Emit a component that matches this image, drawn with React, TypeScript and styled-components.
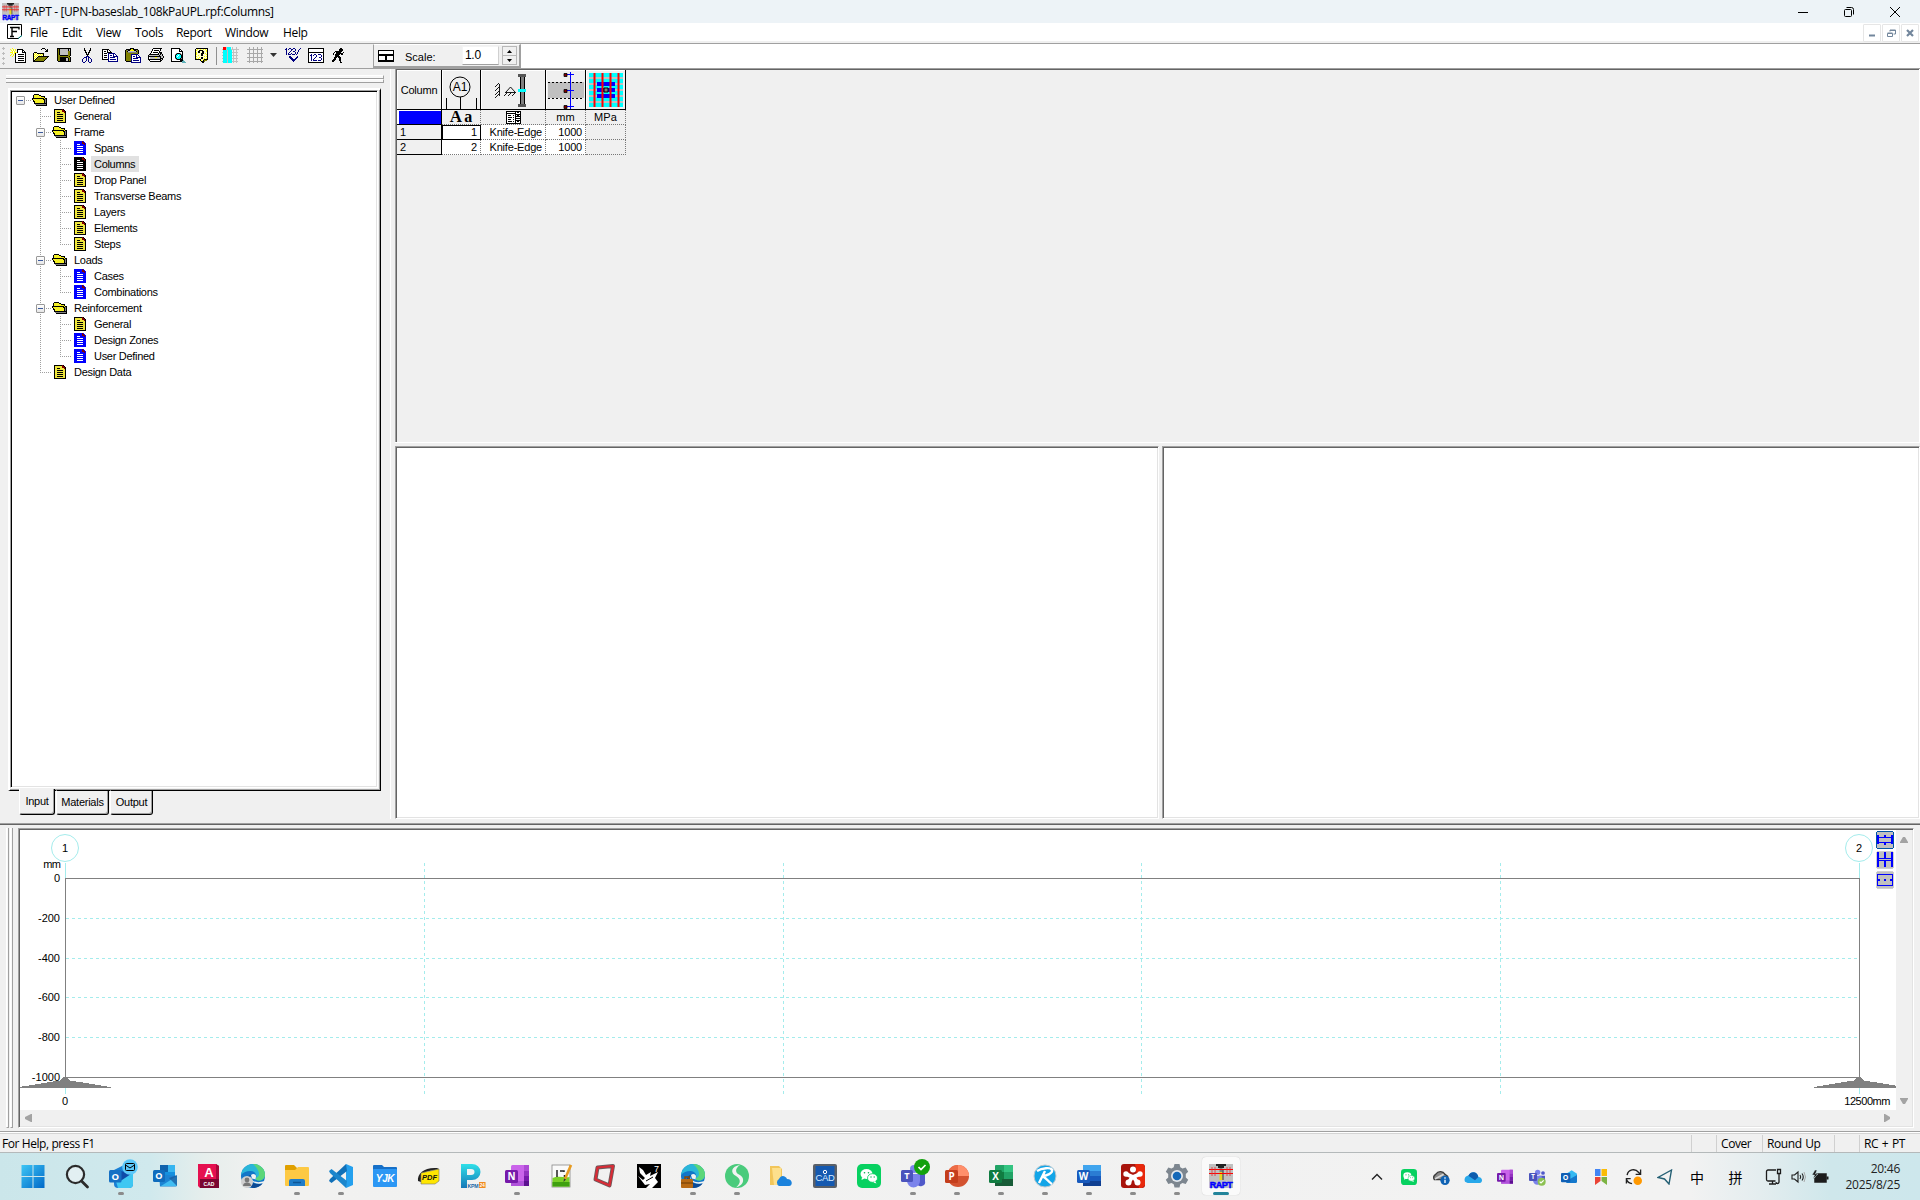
import React from 'react';
import styled, { createGlobalStyle } from 'styled-components';

const uiFont = `"Open Sans", "Noto Sans", sans-serif`;
const sansFont = `"Liberation Sans", Arial, sans-serif`;
const face = '#f0f0f0';

const Global = createGlobalStyle`
  * { box-sizing: border-box; }
  html, body { margin: 0; padding: 0; overflow: hidden; }
  body { width: 1920px; height: 1200px; background: ${face}; color: #000; }
  svg { display: block; flex: none; }
`;

/* ---------- bitmap icons ---------- */

const palette: Record<string, string> = {
  k: '#000000', w: '#ffffff', y: '#ffff00', Y: '#e8e04a', o: '#808000', g: '#808080', s: '#c0c0c0',
  n: '#000080', b: '#0000ff', c: '#00ffff', r: '#ff0000', m: '#800000', d: '#404040', t: '#5fb0b8', p: '#ffffc8',
};

function Bitmap({ rows, colors = {} }: { rows: string[]; colors?: Record<string, string> }) {
  const cells: React.ReactElement[] = [];
  rows.forEach((row, y) => {
    let x = 0;
    while (x < row.length) {
      const ch = row[x];
      let end = x + 1;
      while (end < row.length && row[end] === ch) end += 1;
      const fill = colors[ch] || palette[ch];
      if (fill) cells.push(<rect key={`${x}-${y}`} x={x} y={y} width={end - x} height={1} fill={fill} />);
      x = end;
    }
  });
  const width = Math.max(...rows.map((r) => r.length));
  return <svg width={width} height={rows.length} shapeRendering="crispEdges">{cells}</svg>;
}

const folderRows = [
  '..kkkkk.........',
  '.kYyYyYkk.......',
  '.kyYyYyYykkkk...',
  '.kYyYyYyYyYyk...',
  'kkkkkkkkkkkkykk.',
  'kYyYyYyYyYykkgk.',
  '.kyYyYyYyYyYkgk.',
  '.kkyYyYyYyYykgk.',
  '..kYyYyYyYyYkgk.',
  '..kkkkkkkkkkkkk.',
  '...gggggggggggk.',
  '....kkkkkkkkkkk.',
];

const docRows = [
  'OOOOOOOOmO..',
  'OFFFFFFFmmO.',
  'OFFFFFFFmmmO',
  'OFFLLLFFFFmO',
  'OFFFFFFFFFFO',
  'OFFLLLLLLFFO',
  'OFFFFFFFFFFO',
  'OFFLLLLLLFFO',
  'OFFFFFFFFFFO',
  'OFFLLLLLLFFO',
  'OFFFFFFFFFFO',
  'OFFLLLLLLFFO',
  'OFFFFFFFFFFO',
  'OOOOOOOOOOOO',
];

const docColors: Record<string, Record<string, string>> = {
  yellow: { O: '#000', F: '#efe63c', L: '#000' },
  blue: { O: '#0000ff', F: '#0000ff', L: '#fff' },
  black: { O: '#000', F: '#000', L: '#fff' },
};

const toolIcons: Record<string, string[]> = {
  create: [
    '..y.............', 'y..y.y.kkkkkk...', '.y.y.y.kwwwwkk..', '..ywy..kwwwwkwk.', 'yyywyyykwwwwkkkk', '..ywykwwwwwwwwwk',
    '.y.y.kwwkkkkkkwk', 'y..y.kwwwwwwwwwk', '..y..kwwkkkkkkwk', '.....kwwwwwwwwwk', '.....kwwkkkkkkwk', '.....kwwwwwwwwwk',
    '.....kwwkkkkkkwk', '.....kwwwwwwwwwk', '.....kkkkkkkkkkk',
  ],
  open: [
    '.........kkk....', '........k...k.k.', '.............kk.', '............kkk.', '.kkk............', 'kpypkkkkkkk.....',
    'kypypypypyk.....', 'kpypypypypk.....', 'kypypkkkkkkkkkkk', 'kpypkoooooooook.', 'kypkoooooooook..', 'kpkoooooooook...', 'kkoooooooook....', 'kkkkkkkkkkk.....',
  ],
  save: [
    'kkkkkkkkkkkkkk', 'kokssssssssksk', 'kokssssssssksk', 'kokssssssssook', 'kokssssssssook', 'kokssssssssook', 'kokssssssssook', 'kookkkkkkkkook',
    'koooooooooook.', 'kookkkkkkkkook', 'kookkkkkksskok', 'kookkkkkksskok', 'kookkkkkksskok', '.kkkkkkkkkkkkk',
  ],
  cut: [
    '..k.....k', '..k.....k', '..kk...kk', '...k...k.', '...kk.kk.', '....k.k..', '....kkk..', '.....k...',
    '....nnn..', '..nnn.nn.', '.n..n.n.n', 'n...n.n..n', 'n...n.n..n', 'n..n..n..n', '.nn....nn',
  ],
  copy: [
    'kkkkkkk.........', 'kwwwwkwk........', 'kwkkwkwwk.......', 'kwwwwkkkkk......', 'kwkkkwnnnnnnn...', 'kwwwwwnwwwwnwn..', 'kwkkkwnwnnwnwwn.', 'kwwwwwnwwwwnnnnn',
    'kwkkkwnwnnnnnwwn', 'kwwwwwnwwwwwwwwn', 'kkkkkknwnnnnnnwn', '......nwwwwwwwwn', '......nnnnnnnnnn',
  ],
  paste: [
    '.....kkkk.......', '.kkkkkyykkkkk...', 'kogkkyyyykkgok..', 'koksssssssskok..', 'koogggggggggok..', 'kooooooooooook..', 'kooooonnnnnnn...', 'kooooonwwwwnwn..',
    'kooooonwnnwnwwn.', 'kooooonwwwwnnnnn', 'kooooonwnnnnnwwn', 'kooooonwwwwwwwwn', 'kooooonwnnnnnnwn', '.kkkkknwwwwwwwwn', '......nnnnnnnnnn',
  ],
  print: [
    '.....kkkkkkkkk..', '....kwwwwwwwk...', '....kwkkkkkwk...', '...kwwwwwwwk....', '...kwkkkkkwkkk..', '..kwwwwwwwkskk..', '.kkkkkkkkkksksk.', 'ksssssssssskssk.',
    'kkkkkkkkkkkkkssk', 'kwsssssyyssskssk', 'kwsssssssssskkk.', 'kkkkkkkkkkkkksk.', '.kwwwwwwwwwwkk..', '..kkkkkkkkkkk...',
  ],
  preview: [
    'kkkkkkkkk.......', 'kwwwwwwwkk......', 'kwwwwwwwkwk.....', 'kwwwwwwwkkkk....', 'kwwwwwwwwwwk....', 'kwwwwgkkkgwk....', 'kwwwgkccckgk....', 'kwwwkccwcckk....',
    'kwwwkcwccckk....', 'kwwwkccccckk....', 'kwwwgkccckgk....', 'kwwwwgkkkkkk....', 'kwwwwwwwwkkkt...', 'kkkkkkkkkkkttt..', '...........tttt.',
  ],
  help: [
    '.kkkkkkkkkkkk.', 'kpyppyppypypk.', 'kyppkkkkpppyk.', 'kppkkppkkppyk.', 'kypkkppkkpppk.', 'kyppppkkkpypk.', 'kyppppkkpppyk.', 'kppyppkkppppk.',
    'kypppppppypyk.', 'kpppypkkppppk.', 'kypyppkkpypyk.', 'kkkkkkppykkkk.', '.....kypkooo..', '......kkko....', '.......kk.....',
  ],
  colorGrid: [
    '.rrrscccc.s...s.', '.rrrscccc.s...s.', 'srrrsccccssssssss', '.ccccscccc.s..s.', '.ccccscccc.s..s.', 'sccccsccccssssss', '.ccccscccc.s..s.', '.ccccscccc.s..s.',
    'sccccsccccssssss', '.ccccscccc.s..s.', '.ccccscccc.s..s.', 'sccccsccccssssss', '.ccccscccc.s..s.', '.ccccscccc.s..s.', 'sccccsccccssssss', '.ccccscccc.s..s.',
  ],
  gridLines: [
    '..g...g...g...g.', '..g...g...g...g.', 'gggggggggggggggg', '..g...g...g...g.', '..g...g...g...g.', '..g...g...g...g.', 'gggggggggggggggg', '..g...g...g...g.',
    '..g...g...g...g.', '..g...g...g...g.', 'gggggggggggggggg', '..g...g...g...g.', '..g...g...g...g.', '..g...g...g...g.', 'gggggggggggggggg', '..g...g...g...g.',
  ],
  check: [
    '.n..nn..nn.....n', 'nn.n..nn..n...n.', '.n....n...n..n..', '.n...n..nn...n..', '.n..n.....n.n...', '.n.n..n...n.n...', '.n.nnn.nnn.n....', '................',
    '....nn......n...', '....nnn....nn...', '.....nnn..nn....', '......nnnnn.....', '.......nnn......', '........n.......',
  ],
  numbers: [
    'kkkkkkkkkkkkkkkk', 'kwwwwwwwwwwwwwwk', 'kwwwwwwwwwwwwwwk', 'kwwwwwwwwwwwwwwk', 'kkkkkkkkkkkkkkkk', 'kwwwwwwwwwwwwwwk', 'kwwnwwnnwwnnnwwk', 'kwnnwnwwnwwwwnwk',
    'kwwnwwwwnwwwwnwk', 'kwwnwwwnwwwnnwwk', 'kwwnwwnwwwwwwnwk', 'kwwnwnwwwwwwwnwk', 'kwwnwnnnnwnnnwwk', 'kwwwwwwwwwwwwwwk', 'kkkkkkkkkkkkkkkk',
  ],
  run: [
    '........kk...', '.......kkkk..', '.......kkkk..', '...kkkkkkk...', '..k.kkkkk..k.', '.k..kkkkkkk..', '.k.kkkkk.kk..', '...kkkk......',
    '...kkkkk.....', '..kkk.kkk....', '..kk...kk....', '.kkk...kk....', 'kkk....kk....', 'kk......k....', '........kk...',
  ],
  panes: [
    'kkkkkkkkkkkkkkkk', 'kwwwwwwwwwwwwwwk', 'kwwwwwwwwwwwwwwk', 'kwwwwwwwwwwwwwwk', 'kkkkkkkkkkkkkkkk', 'kkkkkkkkkkkkkkkk', 'kwwwwwwkkwwwwwwk', 'kwwwwwwkkwwwwwwk', 'kwwwwwwkkwwwwwwk', 'kwwwwwwkkwwwwwwk', 'kkkkkkkkkkkkkkkk', 'kkkkkkkkkkkkkkkk',
  ],
};

/* ---------- window frame ---------- */

const Screen = styled.div`
  width: 1920px; height: 1200px; display: flex; flex-direction: column; overflow: hidden; background: ${face};
`;
const TitleBar = styled.header`
  height: 23px; flex: none; display: flex; align-items: center; background: #edf3f7; padding: 0 2px 0 2px;
  font: 12px/22px ${uiFont};
`;
const TitleText = styled.span` margin-left: 5px; letter-spacing: -0.36px; flex: 1; white-space: nowrap; `;
const WindowButton = styled.span` width: 46px; height: 22px; display: flex; align-items: center; justify-content: center; `;
const MenuBar = styled.nav`
  height: 21px; flex: none; display: flex; background: #fff; border-bottom: 1px solid #a0a0a0; padding-left: 7px;
  box-shadow: inset 0 -2px ${face}; font: 12px/19px ${uiFont};
`;
const MenuIcon = styled.span` width: 23px; padding-top: 1px; `;
const MenuItem = styled.span<{ $w: number }>` width: ${(p) => p.$w}px; letter-spacing: -0.35px; white-space: nowrap; `;
const MenuSpace = styled.span` flex: 1; `;
const ChildButton = styled.span`
  width: 18px; height: 18px; margin: 1px 1px 0 0; border: 1px solid #e6e6e6; border-radius: 1px; background: #fff;
  display: flex; align-items: center; justify-content: center;
`;
const ToolBand = styled.div` height: 24px; flex: none; display: flex; background: #fff; `;
const ToolBar = styled.div` width: 373px; display: flex; align-items: center; background: ${face}; `;
const Grip = styled.span`
  width: 6px; height: 20px; background: radial-gradient(circle, #bdbdbd 1.2px, transparent 1.4px) 0 0 / 7px 5px;
`;
const Tool = styled.span<{ $w?: number }>` width: ${(p) => p.$w || 23}px; height: 24px; padding-bottom: 2px; display: flex; align-items: center; justify-content: center; `;
const ToolSeparator = styled.span` width: 1px; height: 18px; margin: 0 2px 0 3px; background: #909090; `;
const ScaleBar = styled.div`
  width: 148px; display: flex; align-items: center; background: ${face}; border: 1px solid #a0a0a0; border-width: 1px 2px 2px 1px;
  border-top-color: #fff; font: 11px/20px ${sansFont}; padding-left: 4px;
`;
const ScaleLabel = styled.span` width: 68px; padding: 2px 0 0 11px; `;
const ScaleInput = styled.span`
  width: 37px; height: 19px; background: #fff; border: 1px solid #e3e3e3; border-color: #f4f4f4 #d0d0d0 #a0a0a0 #f4f4f4; font: 12px/17px ${sansFont}; letter-spacing: -0.3px; padding-left: 2px;
`;
const Spin = styled.span` width: 15px; height: 19px; margin-left: 3px; display: flex; flex-direction: column; border: 1px solid #b8b8b8; background: ${face}; `;
const SpinHalf = styled.span` flex: 1; display: flex; align-items: center; justify-content: center; & + & { border-top: 1px solid #b8b8b8; } `;

/* ---------- workspace ---------- */

const Workspace = styled.main` height: 755px; flex: none; display: flex; border-top: 1px solid #a0a0a0; `;
const SidePane = styled.aside` width: 391px; flex: none; padding: 6px 0 0 6px; border-right: 1px solid #fff; height: 750px; `;
const DockGrip = styled.div`
  width: 378px; height: 4px; border: 1px solid #fff; border-width: 1px 0 0; border-bottom: 1px solid #a0a0a0; border-right: 1px solid #a0a0a0; background: #f8f8f8;
`;
const TabFrame = styled.div`
  width: 373px; height: 703px; margin: 5px 0 0 2px; padding: 0 1px 1px 0; border: 1px solid #fff; border-width: 2px 1px 1px 2px; border-right-color: #000; border-bottom-color: #000;
  box-shadow: inset -1px -1px #a0a0a0;
`;
const TreeBox = styled.div`
  width: 368px; height: 698px; background: #fff; border: 1px solid #a0a0a0; border-right-color: #fff; border-bottom-color: #fff;
  box-shadow: inset 1px 1px #000, inset -1px -1px #e3e3e3; padding: 1px 0 0 1px;
`;
const TreeRow = styled.div` height: 16px; display: flex; align-items: center; font: 11px/16px ${sansFont}; letter-spacing: -0.3px; `;
const TreeCell = styled.span<{ $v?: string; $h?: boolean }>`
  width: 20px; height: 16px; flex: none; display: flex; align-items: center; padding-left: 4px;
  background-image: ${(p) => [
    p.$v ? 'repeating-linear-gradient(180deg, #a0a0a0 0 1px, transparent 1px 2px)' : 'none',
    p.$h ? 'repeating-linear-gradient(90deg, #a0a0a0 0 1px, transparent 1px 2px)' : 'none',
  ].join(', ')};
  background-repeat: no-repeat;
  background-size: 1px ${(p) => (p.$v === 'half' ? '9px' : '16px')}, 12px 1px;
  background-position: 8px 0, 8px 8px;
`;
const Expander = styled.span`
  width: 9px; height: 9px; border: 1px solid #989898; border-radius: 1px; background: linear-gradient(#fff, #e6e6e6); display: flex; align-items: center; justify-content: center;
  &::after { content: ''; width: 5px; height: 1px; background: #3c5a9c; }
`;
const TreeIcon = styled.span` width: 19px; height: 16px; flex: none; display: flex; align-items: center; `;
const DocSlot = styled.span` padding-left: 2px; `;
const TreeLabel = styled.span<{ $on?: boolean }>` height: 16px; padding: 0 4px 0 3px; background: ${(p) => (p.$on ? '#e1e1e1' : 'transparent')}; white-space: nowrap; `;
const Tabs = styled.div` display: flex; padding-left: 13px; font: 11px/23px ${sansFont}; letter-spacing: -0.25px; `;
const Tab = styled.span<{ $w: number; $on?: boolean }>`
  width: ${(p) => p.$w}px; height: 25px; margin: -1px 1px 0 0; text-align: center; background: ${face};
  border: 1px solid #000; border-width: 0 1px 1px 1px; border-left-color: #fff; border-radius: 0 0 3px 3px; box-shadow: inset -1px -1px #a0a0a0;
  ${(p) => p.$on ? 'position: relative; top: -1px; height: 26px; padding-top: 1px;' : 'border-top: 1px solid #000;'}
`;

const Content = styled.section` flex: 1; display: flex; flex-direction: column; margin-left: 4px; `;
const GridPane = styled.div` height: 373px; flex: none; border-left: 1px solid #a0a0a0; border-right: 1px solid #fff; box-shadow: inset 1px 1px #646464; padding: 1px 0 0 1px; `;
const PaneRow = styled.div` display: flex; gap: 3px; border-top: 1px solid #fff; padding-top: 3px; height: 378px; `;
const ViewPane = styled.div<{ $w: number }>`
  width: ${(p) => p.$w}px; height: 373px; background: #fff; border: 1px solid #a0a0a0; border-right-color: #fff; border-bottom-color: #fff; box-shadow: inset 1px 1px #646464, inset -1px -1px #e3e3e3;
`;

const Sheet = styled.div`
  display: grid; width: 229px; grid-template-columns: 45px 39px 65px 40px 40px; grid-template-rows: 40px 15px 15px 15px; font: 11px/14px ${sansFont}; letter-spacing: -0.2px;
`;
const Head = styled.div` background: ${face}; border-right: 1px solid #000; border-bottom: 1px solid #000; box-shadow: inset 1px 1px #fff; display: flex; align-items: center; justify-content: center; `;
const Stub = styled.div<{ $blue?: boolean }>` background: ${(p) => (p.$blue ? '#0000ff' : face)}; border-right: 1px solid #000; border-bottom: 1px solid #000; padding-left: 3px; ${(p) => (p.$blue ? 'box-shadow: inset 2px 1px #fff;' : '')} `;
const Cell = styled.div<{ $bg?: string; $center?: boolean; $active?: boolean }>`
  background: ${(p) => p.$bg || '#fff'}; padding-right: ${(p) => (p.$center ? 0 : 3)}px; text-align: ${(p) => (p.$center ? 'center' : 'right')};
  border-right: 1px dotted #777; border-bottom: 1px dotted #777; display: flex; justify-content: ${(p) => (p.$center ? 'center' : 'flex-end')}; align-items: center;
  ${(p) => (p.$active ? 'outline: 1px solid #000; outline-offset: -1px; border-color: #000;' : '')}
`;
const Serif = styled.span` font: bold 17px/12px "Liberation Serif", serif; letter-spacing: 2px; & small { font-size: 16px; letter-spacing: 0; } `;
const Unit = styled.span` letter-spacing: 0.2px; `;

/* ---------- bottom panel ---------- */

const Bottom = styled.section` height: 308px; flex: none; border-top: 1px solid #a0a0a0; box-shadow: inset 0 1px #646464; display: flex; padding: 4px 0 0 6px; `;
const SideGrip = styled.span` width: 3px; height: 300px; margin-right: 1px; border-left: 1px solid #fff; border-right: 1px solid #a0a0a0; border-bottom: 1px solid #a0a0a0; background: #f8f8f8; `;
const Viewer = styled.div`
  width: 1896px; height: 300px; margin-left: 4px; border: 1px solid #a0a0a0; border-right-color: #fff; border-bottom-color: #fff;
  box-shadow: inset 1px 1px #646464, inset -1px -1px #e3e3e3; padding: 1px 0 0 1px; display: grid; grid-template-columns: 1876px 16px; grid-template-rows: 280px 16px;
`;
const Canvas = styled.div` background: #fff; position: relative; `;
const VScroll = styled.div` background: ${face}; display: flex; flex-direction: column; align-items: center; justify-content: space-between; padding: 6px 0 5px; `;
const HScroll = styled.div` background: ${face}; display: flex; align-items: center; justify-content: space-between; padding: 0 5px 0 5px; `;
const ViewButtons = styled.div` position: absolute; top: 1px; right: 2px; display: flex; flex-direction: column; gap: 2px; `;

const StatusBar = styled.footer` height: 21px; flex: none; border-top: 1px solid #a0a0a0; display: flex; background: ${face}; box-shadow: inset 0 1px #fff, inset 0 2px #d4d4d4; font: 12px/20px ${uiFont}; letter-spacing: -0.42px; padding-top: 3px; `;
const StatusText = styled.span` flex: 1; padding-left: 2px; line-height: 18px; `;
const StatusCell = styled.span<{ $w: number }>` width: ${(p) => p.$w}px; height: 17px; border-left: 1px solid #d0d0d0; padding-left: 4px; line-height: 18px; white-space: nowrap; word-spacing: 1px; `;

/* ---------- taskbar ---------- */

const TaskBar = styled.div`
  height: 48px; flex: none; border-top: 1px solid #b4b9ba; display: flex; padding-left: 11px;
  background: linear-gradient(90deg, #cbe6ea 0, #d0e9ed 150px, #e6eeec 205px, #f1f1f0 260px, #f2f2f2 1690px, #e4edef 1760px, #cfe7eb 1830px, #cde7ec 1920px);
`;
const TaskItem = styled.span<{ $active?: boolean }>`
  width: 44px; height: 47px; display: flex; align-items: center; justify-content: center; position: relative;
  & > svg { overflow: visible; position: relative; z-index: 1; margin-top: -1px; }
  ${(p) => p.$active ? `&::before { content: ''; position: absolute; left: 3px; top: 4px; width: 38px; height: 38px; border-radius: 4px; background: #fafafa; box-shadow: 0 0 1px #bbb; }` : ''}
`;
const Running = styled.i<{ $active?: boolean }>`
  position: absolute; bottom: 5px; left: ${(p) => (p.$active ? 14 : 19)}px; width: ${(p) => (p.$active ? 16 : 6)}px; height: 3px; border-radius: 2px; background: ${(p) => (p.$active ? '#23849a' : '#8b8b8b')};
`;
const Tray = styled.div` margin-left: auto; display: flex; align-items: center; `;
const TrayItem = styled.span<{ $w?: number }>` width: ${(p) => p.$w || 32}px; display: flex; justify-content: center; font: 14px/20px "Noto Sans CJK SC", sans-serif; `;
const Clock = styled.div` width: 68px; margin-right: 20px; text-align: right; font: 12px/16px ${uiFont}; color: #222; letter-spacing: -0.25px; `;
const OverflowSvg = styled.svg` overflow: visible; `;

const svgText = (size: number, extra: React.CSSProperties = {}): React.CSSProperties => ({ fontFamily: 'Liberation Sans, sans-serif', fontSize: size, ...extra });

function Badge({ children, fill, x = 0, y = 5, s = 14 }: { children: string; fill: string; x?: number; y?: number; s?: number }) {
  return (
    <g>
      <rect x={x} y={y} width={s} height={s} rx="1.5" fill={fill} />
      <text x={x + s / 2} y={y + s * 0.78} textAnchor="middle" fill="#fff" style={svgText(s * 0.76, { fontWeight: 700, fontFamily: 'Open Sans, sans-serif' })}>{children}</text>
    </g>
  );
}

function OutlookArt() {
  return (
    <g>
      <rect x="7" y="1" width="15" height="14" rx="1" fill="#1490df" />
      <path d="M7 1h8v7H7z" fill="#0f62ac" /><path d="M15 1h7v7h-7z" fill="#35b5f0" />
      <path d="M6 10l18 2v9a1.500 1.500 0 0 1-1.500 1.500H7z" fill="#1b83d3" />
      <path d="M24 12L8 22h15a1 1 0 0 0 1-1z" fill="#41bdf2" />
      <path d="M16 14l8 8V11z" fill="#185a9e" opacity=".75" />
      <Badge fill="#0f6cbd" y={6} s={12}>O</Badge>
    </g>
  );
}

function WeChatArt() {
  return (
    <g>
      <rect width="24" height="24" rx="5" fill="#07d160" />
      <ellipse cx="9.500" cy="10" rx="6" ry="5" fill="#fff" /><path d="M5 13l-.5 3 3-1.500z" fill="#fff" />
      <ellipse cx="15.500" cy="14" rx="5" ry="4.300" fill="#fff" stroke="#07d160" strokeWidth=".8" /><path d="M18 17l1.500 2.500-3-1z" fill="#fff" />
      <circle cx="7.500" cy="8.800" r=".8" fill="#07b050" /><circle cx="11.500" cy="8.800" r=".8" fill="#07b050" />
      <circle cx="14" cy="13" r=".7" fill="#07b050" /><circle cx="17.200" cy="13" r=".7" fill="#07b050" />
    </g>
  );
}

function EdgeArt() {
  return (
    <g>
      <circle cx="12" cy="12" r="12" fill="#1276c8" />
      <path d="M0 11C1 4 6 0 12 0c7 0 12 5 12 10.500 0 4-3 6-6 6-3.500 0-4-1.500-3-3C16 11 14 7 9.500 7 5 7 1.500 9 0 11z" fill="#2ab6d9" />
      <path d="M12 0c7 0 12 5 12 10.500 0 4-3 6-6 6-2.500 0-3.500-1-3-2.500 4-1 5-7-3-14z" fill="#5cd679" />
      <path d="M9 13c0 5 5 8.500 12.500 6.500C19 23 15 24 12 24 7 23 4 19 6 14c1-2 2.500-3 4-3z" fill="#0d4a94" />
      <path d="M9.500 12.500c0 4 5 7.500 14 4.500l-1 2c-4 1-6 1-8.500 0-4-1.500-5-4-4.500-6.500z" fill="#f2f2f2" />
      <path d="M10 11c2-2 5-1 5 1.500 0 1.500-1 2 0 3l-4-1z" fill="#f2f2f2" />
    </g>
  );
}

function OneNoteArt() {
  return (
    <g>
      <rect x="6" y="1" width="18" height="21" rx="1.500" fill="#ca64ea" />
      <path d="M19 1h5v6h-5z" fill="#ae4bd5" /><path d="M19 7h5v5h-5z" fill="#9332bf" /><path d="M19 12h5v5h-5z" fill="#7719aa" /><path d="M6 17h18v5H6z" fill="#b052da" /><path d="M19 17h5v5h-5z" fill="#5c1190" />
      <Badge fill="#7719aa" y={6} s={13}>N</Badge>
    </g>
  );
}

function TeamsArt() {
  return (
    <g>
      <circle cx="13" cy="5" r="4" fill="#7b83eb" /><circle cx="21" cy="6" r="2.800" fill="#5059c9" />
      <path d="M15 10h9v7a4 4 0 0 1-8 2z" fill="#5059c9" /><path d="M6 10h13v7a6.500 6.500 0 0 1-13 0z" fill="#7b83eb" />
      <Badge fill="#4b53bc" y={6} s={12}>T</Badge>
    </g>
  );
}

function RaptArt() {
  return (
    <g>
      <rect width="24" height="24" fill="#c0c0c0" />
      <path d="M7 0h10v2h-2v2H9V2H7z" fill="#222" /><path d="M10.500 4h3v4h-3z" fill="#808080" /><path d="M10.500 8h3v8h-3z" fill="#e8d820" /><path d="M14 6v10" stroke="#333" />
      <path d="M0 5.500h24M0 9.500h24" stroke="#f00" strokeWidth="1" /><path d="M3 3v9M6 3v9M18 3v9M21 3v9" stroke="#e03030" strokeWidth=".8" />
      <text x="12" y="23.800" textAnchor="middle" fill="#00f" stroke="#00f" strokeWidth=".5" style={svgText(9, { fontWeight: 700, letterSpacing: -0.5 })}>RAPT</text>
    </g>
  );
}

const taskArt: Record<string, React.ReactElement> = {
  windows: <g><defs><linearGradient id="win" x2="1" y2="1"><stop offset="0" stopColor="#3dc6f5" /><stop offset="1" stopColor="#0068c8" /></linearGradient></defs><path fill="url(#win)" d="M.5 1h11v11H.5zm12 0h11v11h-11zM.5 13h11v11H.5zm12 0h11v11h-11z" /></g>,
  search: <g fill="none" stroke="#2b2b2b"><circle cx="10.500" cy="10.500" r="8.600" strokeWidth="2.200" fill="#e2eff2" /><path d="M16.500 17l6 6" strokeWidth="2.800" strokeLinecap="round" /></g>,
  outlookNew: <g><path d="M5 6l10-5 9 5v14a4 4 0 0 1-4 4H9a4 4 0 0 1-4-4z" fill="#1a80d5" /><path d="M6 14l18-5v11a4 4 0 0 1-4 4H9z" fill="#3fc7f2" /><path d="M9 6l13 4-12 8z" fill="#0e4aa8" /><Badge fill="#1570c4" y={6} s={12.500}>O</Badge><circle cx="21" cy="3" r="7.800" fill="#5cc8fa" /><rect x="16.500" y="-.5" width="9" height="7" rx="1" fill="none" stroke="#000" /><path d="M16.500 1l4.500 3 4.500-3" fill="none" stroke="#000" /></g>,
  outlook: <OutlookArt />,
  autocad: <g><path d="M1 0h18l3 2v22H3L1 22z" fill="#e51050" /><path d="M19 0l3 2v14h-3z" fill="#a8083a" /><path d="M3 15h19v9H3z" fill="#7a0630" /><text x="12" y="13" textAnchor="middle" fill="#fff" style={svgText(13, { fontWeight: 700 })}>A</text><text x="12" y="22" textAnchor="middle" fill="#fff" style={svgText(5, { fontWeight: 700 })}>CAD</text></g>,
  edgeUser: <g><EdgeArt /><circle cx="6" cy="18" r="6" fill="#d0d0d0" /><circle cx="6" cy="16" r="2.400" fill="#777" /><path d="M2 22a4 3.500 0 0 1 8 0z" fill="#777" /></g>,
  folder: <g><path d="M0 2a1 1 0 0 1 1-1h8l3 3v4H0z" fill="#e0a000" /><path d="M0 6h10l3-3h10a1 1 0 0 1 1 1v17a1 1 0 0 1-1 1H1a1 1 0 0 1-1-1z" fill="#fdc944" /><path d="M4 17a2 2 0 0 1 2-2h12a2 2 0 0 1 2 2v5H4z" fill="#1e7cc8" /><path d="M8 18.500h8" stroke="#0d5596" strokeWidth="1.500" /></g>,
  vscode: <g><path d="M17 0l7 3v18l-7 3z" fill="#24a0ee" /><path d="M17 0L1 15l-1 2 2.500 2L18 7z" fill="#1070b8" /><path d="M17 24L1 9 0 7l2.500-2L18 17z" fill="#1c86cc" /></g>,
  yjk: <g><path d="M0 2a1 1 0 0 1 1-1h8l2 2h12a1 1 0 0 1 1 1v4H0z" fill="#1670c8" /><rect y="5" width="24" height="18" rx="1" fill="#2c97f4" /><text x="12" y="18" textAnchor="middle" fill="#fff" style={svgText(10, { fontWeight: 700, fontStyle: 'italic', letterSpacing: -0.4 })}>YJK</text></g>,
  pdf: <g><path d="M1 17C0 9 8 3 20 4l2 1v2C10 5 3 10 4 18z" fill="#222" /><path d="M4 9l18-4v12l-4 3H4z" fill="#ffe600" stroke="#777" strokeWidth=".6" /><text x="12.500" y="16" textAnchor="middle" fill="#111" style={svgText(7.500, { fontWeight: 700, fontStyle: 'italic' })}>PDF</text></g>,
  kpm: <g><defs><linearGradient id="kp" x2="0" y2="1"><stop offset="0" stopColor="#2fe0e8" /><stop offset="1" stopColor="#1678b8" /></linearGradient></defs><path d="M0 0h11a8.500 8 0 0 1 0 16H6v8H0z" fill="url(#kp)" /><path d="M6 5h4a3.500 3 0 0 1 0 6H6z" fill="#f2f2f2" /><text x="6.500" y="23.500" fill="#1767a8" style={svgText(5.200, { fontWeight: 700, letterSpacing: -0.2 })}>KPM</text><rect x="18" y="18" width="6.500" height="6" fill="#f08a20" /><text x="18.800" y="22.800" fill="#fff" style={svgText(4.500, { fontWeight: 700 })}>24</text></g>,
  onenote: <OneNoteArt />,
  notepad: <g><rect x="3" y="1" width="18" height="22" fill="#fafafa" stroke="#888" strokeWidth=".8" /><path d="M3.500 14c6-3 11 0 17-1v9.500h-17z" fill="#7ad028" /><path d="M3.500 18h17v4.500h-17z" fill="#3fa010" /><path d="M8 6v7M11 7h4v1M15.500 11v2" stroke="#222" strokeWidth="1.500" fill="none" /><path d="M22 1L16 15" stroke="#e89b20" strokeWidth="2.600" /><path d="M14.500 18l.5-3.500 2 1z" fill="#333" /></g>,
  redShape: <g fill="none" strokeLinejoin="round"><path d="M4.500 3.500L20 2l-3.500 19.500L2.500 15.500z" stroke="#6d5a5c" strokeWidth="4" /><path d="M4.500 3.500L20 2l-3.500 19.500L2.500 15.500z" stroke="#d92b35" strokeWidth="2.200" /></g>,
  rhino: <g><rect width="24" height="24" fill="#000" /><path d="M2 3l4 3 3 5 5-3-1 4 8-4-3 6 3 4-6 6H9l4-4-5 1-7-9 5 4 2-2-5-5z" fill="#fff" /><path d="M9 17l7-4" stroke="#000" /><text x="17" y="8" fill="#fff" style={svgText(9)}>7</text></g>,
  edgeWork: <g><EdgeArt /><rect x="0" y="15" width="12" height="9" rx="1" fill="#b86a14" /><path d="M0 19h12" stroke="#6b3a05" /><path d="M4 15v-2h4v2" fill="none" stroke="#8b4a08" strokeWidth="1.500" /></g>,
  green: <g><circle cx="12" cy="12" r="12" fill="#4acb7c" /><path d="M15 1C6 2 5 9 11 12c5 3 5 7 0 11.500C20 21 20 13 14 10.500c-4-2-4-6 1-9.500z" fill="#f2f2f2" /></g>,
  folderCloud: <g><path d="M1 2h9l3 3v16H1z" fill="#f2c65a" /><path d="M3 4h9v17H5z" fill="#fde08c" /><path d="M10 22a4 4 0 0 1 0-7c2-5 7-3 8 0 6 0 6 7 2 7z" fill="#1b82dc" /></g>,
  cad: <g><rect width="24" height="24" rx="2" fill="#5a6068" /><rect x="2.500" y="2" width="19" height="20" fill="#1459b0" /><text x="12" y="17" textAnchor="middle" fill="#d8ecff" style={svgText(9.500, { letterSpacing: -0.4 })}>CAD</text><circle cx="12" cy="8" r="1.700" fill="none" stroke="#fff" /></g>,
  wechat: <WeChatArt />,
  teams: <g><TeamsArt /><circle cx="21" cy="3" r="8" fill="#13a10e" /><path d="M17.500 3l2.500 2.500 4.500-4.500" fill="none" stroke="#fff" strokeWidth="1.700" /></g>,
  ppt: <g><circle cx="13" cy="12" r="11" fill="#d35230" /><path d="M13 1a11 11 0 0 1 11 11H13z" fill="#ff8f6b" /><path d="M13 1v11H2A11 11 0 0 1 13 1z" fill="#ed6c47" /><Badge fill="#c43e1c" y={6} s={13}>P</Badge></g>,
  excel: <g><rect x="6" y="1" width="18" height="21" rx="1" fill="#21a366" /><path d="M15 1h9v7h-9z" fill="#33c481" /><path d="M6 8h9v7H6z" fill="#107c41" /><path d="M6 15h18v7H6z" fill="#185c37" /><Badge fill="#107c41" y={6} s={13}>X</Badge></g>,
  rhinoBlue: <g><circle cx="12" cy="12" r="11" fill="#12a5e8" stroke="#b9c7cf" /><path d="M4 7c5-3 14-4 15-1s-5 6-10 6c4 1 6 6 10 8M12 7L6 19" fill="none" stroke="#fff" strokeWidth="2.400" /></g>,
  word: <g><rect x="6" y="1" width="18" height="21" rx="1" fill="#2b7cd3" /><path d="M6 1h18v6H6z" fill="#41a5ee" /><path d="M6 12h18v5H6z" fill="#185abd" /><path d="M6 17h18v5H6z" fill="#103f91" /><Badge fill="#185abd" y={6} s={13}>W</Badge></g>,
  redMan: <g><rect width="24" height="24" rx="3" fill="#a8140c" /><path d="M14 0h8l2 3v18l-3 3h-3z" fill="#e8280c" /><circle cx="12" cy="5.500" r="3" fill="#fff" /><circle cx="5" cy="10" r="2.700" fill="#fff" /><circle cx="19" cy="10" r="2.700" fill="#fff" /><circle cx="7.500" cy="18.500" r="3" fill="#fff" /><circle cx="16.500" cy="18.500" r="3" fill="#fff" /><path d="M5 10l7 3 7-3M12 12l-4 6M12 12l4 6" stroke="#fff" strokeWidth="4" fill="none" /></g>,
  settings: <g><path d="M9.500 0h5l.8 3.300 2.200 1.200 3.200-1 2.500 4.200-2.400 2.300v3.500l2.400 2.300-2.500 4.200-3.200-1-2.200 1.200-.8 3.300h-5l-.8-3.300-2.200-1.200-3.200 1L.8 15.800l2.400-2.300V10L.8 7.700l2.500-4.200 3.200 1 2.200-1.200z" fill="#7d868f" /><circle cx="12" cy="12" r="6" fill="#e4e8ec" /><circle cx="12" cy="12" r="4.300" fill="#1468b8" /></g>,
  rapt: <RaptArt />,
};

const running = new Set(['outlookNew', 'folder', 'vscode', 'onenote', 'edgeWork', 'green', 'teams', 'ppt', 'excel', 'rhinoBlue', 'word', 'redMan', 'settings', 'rapt']);

function TaskButtons() {
  return (
    <>
      {Object.keys(taskArt).map((name) => (
        <TaskItem key={name} $active={name === 'rapt'}>
          <svg width="24" height="24" viewBox="0 0 24 24">{taskArt[name]}</svg>
          {running.has(name) && <Running $active={name === 'rapt'} />}
        </TaskItem>
      ))}
    </>
  );
}

const Small = ({ children, size = 16 }: { children: React.ReactNode; size?: number }) => (
  <OverflowSvg width={size} height={size} viewBox="0 0 24 24">{children}</OverflowSvg>
);

function SystemTray() {
  return (
    <Tray>
      <TrayItem><svg width="12" height="8"><path d="M1 6.500l5-5 5 5" fill="none" stroke="#222" strokeWidth="1.400" /></svg></TrayItem>
      <TrayItem><Small><WeChatArt /></Small></TrayItem>
      <TrayItem><Small><path d="M2 16a6 6 0 0 1 2-8c4-6 11-5 14 0l4 3v5z" fill="#8a8a8a" stroke="#3b3b3b" strokeWidth="2" /><path d="M3 15L16 8" stroke="#d8d8d8" strokeWidth="2.500" /><circle cx="18" cy="17" r="7" fill="#0f62b4" /><path d="M18 12.500v2M18 16v5" stroke="#fff" strokeWidth="2" /></Small></TrayItem>
      <TrayItem><Small><path d="M0 19c-2-5 1-9 5-9 4-8 14-6 15 2 7 0 7 9 2 9H4z" fill="#28a8ea" /><path d="M5 10c4-8 14-6 15 2l-5 5z" fill="#0c5cae" /></Small></TrayItem>
      <TrayItem><Small><OneNoteArt /></Small></TrayItem>
      <TrayItem><Small><TeamsArt /><circle cx="19" cy="19" r="6" fill="#8cc152" /><path d="M16 19l2 2 4-4" fill="none" stroke="#fff" strokeWidth="1.800" /></Small></TrayItem>
      <TrayItem><Small><path d="M8 7l8-5 8 5v12H8z" fill="#35b9f1" /><path d="M8 18l16-9v10a2 2 0 0 1-2 2H8z" fill="#1478cc" /><Badge fill="#0f5fb5" y={6} s={14}>O</Badge></Small></TrayItem>
      <TrayItem><svg width="12" height="16"><path d="M0 0h5.500v7H0z" fill="#4285f4" /><path d="M6.500 0H12v7H6.500z" fill="#fbbc05" /><path d="M0 8h5.500v4L0 16z" fill="#ea4335" /><path d="M6.500 8H12v8l-5.500-4z" fill="#7cb342" /></svg></TrayItem>
      <TrayItem><Small size={17}><path d="M3 10a9 9 0 0 1 16-4l3 3M22 2v7h-7M2 22v-7h6M2 16a9 9 0 0 0 8 6" fill="none" stroke="#222" strokeWidth="1.900" /><circle cx="18" cy="18" r="6" fill="#ff9800" /></Small></TrayItem>
      <TrayItem><svg width="16" height="16"><path d="M14.500 1L1 8.500l6.500 1.500 4.500 5z" fill="none" stroke="#245f74" strokeWidth="1.400" /></svg></TrayItem>
      <TrayItem $w={32}>中</TrayItem>
      <TrayItem $w={45}>拼</TrayItem>
      <TrayItem $w={31}><svg width="17" height="17"><path d="M11 2H3a1.500 1.500 0 0 0-1.500 1.500v8A1.500 1.500 0 0 0 3 13h7.500M4 16h7M7.500 13v3M12.500 1.500h3v4h-3zM14 5.500V14a1.500 1.500 0 0 1-3 0" fill="none" stroke="#1c1c1c" strokeWidth="1.300" /></svg></TrayItem>
      <TrayItem $w={20}><svg width="16" height="14"><path d="M1 5h2.500L7 2v10L3.500 9H1z" fill="none" stroke="#1c1c1c" strokeWidth="1.100" /><path d="M9 5q1.500 2 0 4M11 3.500q2.500 3.500 0 7" fill="none" stroke="#1c1c1c" strokeWidth="1.100" /><path d="M13 2q3 5 0 10" fill="none" stroke="#aaa" /></svg></TrayItem>
      <TrayItem $w={23}><svg width="17" height="14"><path d="M4 4h10v8H3V8" fill="#1c1c1c" stroke="#1c1c1c" strokeWidth="1.500" /><path d="M15.500 6.500v3" stroke="#1c1c1c" strokeWidth="2" /><path d="M3 0L0 5h2.500L1 9l5-5H3.500L5 0z" fill="#1c1c1c" stroke="#cfe7eb" strokeWidth=".5" /></svg></TrayItem>
      <Clock>20:46<br />2025/8/25</Clock>
    </Tray>
  );
}

/* ---------- tree ---------- */

type Node = { label: string; depth: number; kind: 'folder' | 'yellow' | 'blue' | 'black'; last?: boolean };
const nodes: Node[] = [
  { label: 'User Defined', depth: 0, kind: 'folder' },
  { label: 'General', depth: 1, kind: 'yellow' },
  { label: 'Frame', depth: 1, kind: 'folder' },
  { label: 'Spans', depth: 2, kind: 'blue' },
  { label: 'Columns', depth: 2, kind: 'black' },
  { label: 'Drop Panel', depth: 2, kind: 'yellow' },
  { label: 'Transverse Beams', depth: 2, kind: 'yellow' },
  { label: 'Layers', depth: 2, kind: 'yellow' },
  { label: 'Elements', depth: 2, kind: 'yellow' },
  { label: 'Steps', depth: 2, kind: 'yellow', last: true },
  { label: 'Loads', depth: 1, kind: 'folder' },
  { label: 'Cases', depth: 2, kind: 'blue' },
  { label: 'Combinations', depth: 2, kind: 'blue', last: true },
  { label: 'Reinforcement', depth: 1, kind: 'folder' },
  { label: 'General', depth: 2, kind: 'yellow' },
  { label: 'Design Zones', depth: 2, kind: 'blue' },
  { label: 'User Defined', depth: 2, kind: 'blue', last: true },
  { label: 'Design Data', depth: 1, kind: 'yellow', last: true },
];

function Tree() {
  return (
    <TreeBox>
      {nodes.map((n, i) => (
        <TreeRow key={i}>
          {n.depth > 0 && <TreeCell />}
          {n.depth > 1 && <TreeCell $v="full" />}
          <TreeCell $v={n.depth === 0 ? undefined : n.last ? 'half' : 'full'} $h>{n.kind === 'folder' && <Expander />}</TreeCell>
          <TreeIcon>
            {n.kind === 'folder' ? <Bitmap rows={folderRows} /> : <DocSlot><Bitmap rows={docRows} colors={docColors[n.kind]} /></DocSlot>}
          </TreeIcon>
          <TreeLabel $on={n.kind === 'black'}>{n.label}</TreeLabel>
        </TreeRow>
      ))}
    </TreeBox>
  );
}

/* ---------- column sheet ---------- */

function ColumnSheet() {
  return (
    <Sheet>
      <Head>Column</Head>
      <Head>
        <svg width="36" height="38"><circle cx="17" cy="16" r="10" fill="none" stroke="#000" /><text x="17" y="20" textAnchor="middle" style={svgText(12)}>A1</text><path d="M3.500 27v11M17.500 26v12M33.500 27v11" stroke="#000" /></svg>
      </Head>
      <Head>
        <svg width="63" height="38" fill="none" stroke="#000">
          <path d="M17.500 13v12M13 16l4-4M13 20l4-4M13 24l4-4M13 27l4-4" strokeWidth=".9" />
          <path d="M23 21.500h11M24 21l4.500-5 4.500 5M22 25l3-3M26 25l3-3M30 25l3-3" strokeWidth=".9" />
          <path d="M36 4.500h8M36 34.500h8" strokeWidth="3" stroke="#555" /><path d="M38.500 6v27M42.500 6v27" /><path d="M40.500 6v27" stroke="#808080" strokeWidth="3" /><path d="M36 19.500h8" stroke="#0ff" strokeWidth="3" />
        </svg>
      </Head>
      <Head>
        <svg width="38" height="38" fill="none"><path d="M1 11h36v16H1z" fill="#c0c0c0" /><path d="M1 11.500h36M1 27.500h36" stroke="#000" strokeDasharray="2 2" /><path d="M23.500 1v37M20 3.500h7M20 19.500h7M20 35.500h7" stroke="#00f" /><path d="M17 2.500h3v3h-3zM17 18.500h3v3h-3zM17 34.500h3v3h-3z" fill="#800000" stroke="#000" strokeWidth=".8" /></svg>
      </Head>
      <Head>
        <svg width="34" height="34"><path d="M0 0h34v34H0z" fill="#0ff" /><path d="M0 5h34M0 11h34M0 17h34M0 23h34M0 29h34" stroke="#c0c0c0" strokeWidth="2" /><path d="M8 9h18v4H8zM8 15h18v4H8zM8 21h18v4H8z" fill="#00f" /><path d="M5.500 0v34M13.500 0v34M21.500 0v34M29.500 0v34" stroke="#f00" strokeWidth="2" /><path d="M15 15h4v4h-4z" fill="#808080" stroke="#000" /></svg>
      </Head>
      <Stub $blue />
      <Cell $bg={face} $center><Serif>A<small>a</small></Serif></Cell>
      <Cell $bg={face} $center>
        <Bitmap rows={['kkkkkkkkkkkkkkk', 'kwwwwwwwwkwkkwk', 'kkkkkkkkkkwwwwk', 'kwwwwwwwwkkkkkk', 'kwkkkwwkwkwkkwk', 'kwwwwwwwwkkkkkk', 'kwkkkkwkwkwwwwk', 'kwwwwwwwwkkkkkk', 'kwkkkwwkwkwwwwk', 'kwwwwwwwwkkkkkk', 'kwkkkkwkwkwkkwk', 'kwwwwwwwwkwwwwk', 'kkkkkkkkkkkkkkk']} />
      </Cell>
      <Cell $bg={face} $center><Unit>mm</Unit></Cell>
      <Cell $bg={face} $center><Unit>MPa</Unit></Cell>
      {[1, 2].map((n) => (
        <React.Fragment key={n}>
          <Stub>{n}</Stub>
          <Cell $active={n === 1}>{n}</Cell>
          <Cell>Knife-Edge</Cell>
          <Cell>1000</Cell>
          <Cell $bg={face} />
        </React.Fragment>
      ))}
    </Sheet>
  );
}

/* ---------- elevation chart ---------- */

const depths = [0, -200, -400, -600, -800, -1000];
const depthY = [48.5, 88.5, 128.5, 167.5, 207.5, 247.5];
const spansX = [404.5, 763.5, 1121.5, 1480.5];

function Elevation() {
  const support = (x: number) => `M${x - 46} 258v-1l6-1 9-1.500 12-2 13-2 3-3v-1h4v1l3 3 13 2 12 2 9 1.500 7 1v1z`;
  return (
    <svg width="1876" height="280" style={svgText(11)}>
      <g stroke="#a4ecec" fill="none" shapeRendering="crispEdges">
        {depthY.slice(1, 5).map((y) => <path key={y} d={`M46 ${y}H1837`} strokeDasharray="3 3" />)}
        {spansX.map((x) => <path key={x} d={`M${x} 33V264`} strokeDasharray="3 3" />)}
        <path d="M45.500 33v15M45.500 258v6M1839.500 33v15M1839.500 258v6" />
      </g>
      <circle cx="45" cy="18" r="13.500" fill="none" stroke="#a4ecec" />
      <circle cx="1839" cy="18" r="13.500" fill="none" stroke="#a4ecec" />
      <path d="M45.500 48.500H1839.500V247.500H45.500z" fill="none" stroke="#808080" shapeRendering="crispEdges" />
      <path d={support(45.5)} fill="#808080" shapeRendering="crispEdges" />
      <path d={support(1839.5)} fill="#808080" shapeRendering="crispEdges" />
      <text x="45" y="22" textAnchor="middle">1</text>
      <text x="1839" y="22" textAnchor="middle">2</text>
      <text x="40.500" y="38" textAnchor="end" letterSpacing="-0.5">mm</text>
      {depths.map((d, i) => <text key={d} x="40" y={depthY[i] + 3.5} textAnchor="end">{d}</text>)}
      <text x="45" y="275" textAnchor="middle">0</text>
      <text x="1870" y="274.500" textAnchor="end" letterSpacing="-0.45">12500mm</text>
    </svg>
  );
}

const ViewIcon = ({ kind }: { kind: 'section' | 'column' | 'plan' }) => (
  <svg width="18" height="18" shapeRendering="crispEdges" fill="none" stroke="#00f">
    <rect x=".5" y=".5" width="17" height="17" rx="2" fill="#c0c0c0" stroke={kind === 'section' ? '#0055a5' : '#cfcfcf'} />
    {kind === 'section' && <><path d="M1 6.500h16M1 11.500h16" /><path d="M2 4v9M16 4v9M9 4v3M9 11v3" strokeWidth="2" /></>}
    {kind === 'column' && <><path d="M1 7.500h16M1 9.500h16" /><path d="M2 1v15M9 1v6M9 10v6M16 1v15" strokeWidth="2" /></>}
    {kind === 'plan' && <><path d="M1.500 3.500h15v11h-15z" /><path d="M2 9h2M8 9h2M14 9h2" strokeWidth="2" /></>}
  </svg>
);

const Arrow = ({ d }: { d: string }) => <svg width="8" height="8"><path d={d} fill="#a3a3a3" /></svg>;

export default function App() {
  return (
    <Screen>
      <Global />
      <TitleBar>
        <OverflowSvg width="17" height="17" viewBox="0 0 24 24"><RaptArt /></OverflowSvg>
        <TitleText>RAPT - [UPN-baseslab_108kPaUPL.rpf:Columns]</TitleText>
        <WindowButton><svg width="10" height="10"><path d="M0 5.500h10" stroke="#000" /></svg></WindowButton>
        <WindowButton><svg width="10" height="10" fill="none" stroke="#000"><rect x=".5" y="2.500" width="7" height="7" rx="1" /><path d="M2.500.5h5a2 2 0 0 1 2 2v5" /></svg></WindowButton>
        <WindowButton><svg width="10" height="10"><path d="M0 0l10 10M10 0L0 10" stroke="#000" /></svg></WindowButton>
      </TitleBar>
      <MenuBar>
        <MenuIcon>
          <svg width="16" height="16" fill="none" stroke="#000"><path d="M.5 .5h14v11l-3 3H.5z" fill="#fff" /><path d="M5 13V3.500M3 3.500h9v2M5 7.500h5M3 12.500h4" strokeWidth="1.400" /><path d="M11 14.500l4-3" stroke="#008080" /></svg>
        </MenuIcon>
        <MenuItem $w={32}>File</MenuItem>
        <MenuItem $w={34}>Edit</MenuItem>
        <MenuItem $w={39}>View</MenuItem>
        <MenuItem $w={41}>Tools</MenuItem>
        <MenuItem $w={49}>Report</MenuItem>
        <MenuItem $w={58}>Window</MenuItem>
        <MenuItem $w={40}>Help</MenuItem>
        <MenuSpace />
        <ChildButton><svg width="8" height="8"><path d="M1 6.500h6" stroke="#72869c" strokeWidth="2" /></svg></ChildButton>
        <ChildButton><svg width="9" height="9" fill="none" stroke="#72869c"><path d="M.5 4.500h5v3h-5zM.5 4h5M3 2.500V1h5.500v4H6.500M3 1.500h5.500" /></svg></ChildButton>
        <ChildButton><svg width="8" height="8"><path d="M1 1l6 6M7 1L1 7" stroke="#72869c" strokeWidth="2.200" /></svg></ChildButton>
      </MenuBar>
      <ToolBand>
        <ToolBar>
          <Grip />
          {['create', 'open', 'save', 'cut', 'copy', 'paste', 'print', 'preview', 'help'].map((k) => <Tool key={k}><Bitmap rows={toolIcons[k]} /></Tool>)}
          <ToolSeparator />
          <Tool><Bitmap rows={toolIcons.colorGrid} /></Tool>
          <Tool $w={25}><Bitmap rows={toolIcons.gridLines} colors={{ g: '#a8a8a8' }} /></Tool>
          <Tool $w={13}><svg width="7" height="4"><path d="M0 0h7L3.500 4z" fill="#333" /></svg></Tool>
          <Tool $w={25}><Bitmap rows={toolIcons.check} /></Tool>
          <Tool $w={22}><Bitmap rows={toolIcons.numbers} /></Tool>
          <Tool><Bitmap rows={toolIcons.run} /></Tool>
        </ToolBar>
        <ScaleBar>
          <Bitmap rows={toolIcons.panes} />
          <ScaleLabel>Scale:</ScaleLabel>
          <ScaleInput>1.0</ScaleInput>
          <Spin>
            <SpinHalf><svg width="5" height="3"><path d="M0 3h5L2.500 0z" fill="#000" /></svg></SpinHalf>
            <SpinHalf><svg width="5" height="3"><path d="M0 0h5L2.500 3z" fill="#000" /></svg></SpinHalf>
          </Spin>
        </ScaleBar>
      </ToolBand>
      <Workspace>
        <SidePane>
          <DockGrip />
          <DockGrip />
          <TabFrame><Tree /></TabFrame>
          <Tabs>
            <Tab $w={36} $on>Input</Tab>
            <Tab $w={53}>Materials</Tab>
            <Tab $w={43}>Output</Tab>
          </Tabs>
        </SidePane>
        <Content>
          <GridPane><ColumnSheet /></GridPane>
          <PaneRow><ViewPane $w={764} /><ViewPane $w={758} /></PaneRow>
        </Content>
      </Workspace>
      <Bottom>
        <SideGrip /><SideGrip />
        <Viewer>
          <Canvas>
            <Elevation />
            <ViewButtons><ViewIcon kind="section" /><ViewIcon kind="column" /><ViewIcon kind="plan" /></ViewButtons>
          </Canvas>
          <VScroll><Arrow d="M0 7h8V6L5 1H3L0 6z" /><Arrow d="M0 1h8v1L5 7H3L0 2z" /></VScroll>
          <HScroll><Arrow d="M7 0v8H6L0 5V3L6 0z" /><Arrow d="M1 0v8h1l5-3V3L2 0z" /></HScroll>
        </Viewer>
      </Bottom>
      <StatusBar>
        <StatusText>For Help, press F1</StatusText>
        <StatusCell $w={25} />
        <StatusCell $w={46}>Cover</StatusCell>
        <StatusCell $w={72}>Round Up</StatusCell>
        <StatusCell $w={25} />
        <StatusCell $w={61}>RC + PT</StatusCell>
      </StatusBar>
      <TaskBar>
        <TaskButtons />
        <SystemTray />
      </TaskBar>
    </Screen>
  );
}
